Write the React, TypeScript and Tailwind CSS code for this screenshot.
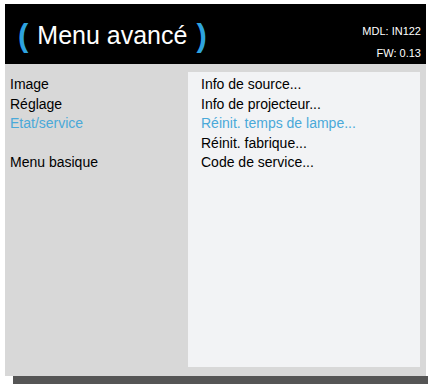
import React from 'react';

const leftItems = [
  { label: 'Image' },
  { label: 'Réglage' },
  { label: 'Etat/service', active: true },
  { label: '' },
  { label: 'Menu basique' },
];

const rightItems = [
  { label: 'Info de source...' },
  { label: 'Info de projecteur...' },
  { label: 'Réinit. temps de lampe...', active: true },
  { label: 'Réinit. fabrique...' },
  { label: 'Code de service...' },
];

export default function App() {
  return (
    <div className="w-[428px] h-[384px] bg-white overflow-hidden font-['Liberation_Sans',Arial,sans-serif]">
      <div className="ml-[5px] mt-[4px] w-[421px]">
        {/* Header */}
        <div className="h-[60px] bg-black flex items-start justify-between pl-[13px] pr-[5px]">
          <div className="flex items-center h-[60px] pt-[2px] gap-[9px]">
            <span className="text-[#2ea3df] text-[31px] font-bold leading-none">(</span>
            <span className="text-white text-[25px] leading-none">Menu avancé</span>
            <span className="text-[#2ea3df] text-[31px] font-bold leading-none">)</span>
          </div>
          <div className="flex flex-col items-end text-white text-[11px] leading-none pt-[22px] gap-[11px]">
            <span>MDL: IN122</span>
            <span>FW: 0.13</span>
          </div>
        </div>

        {/* Body */}
        <div className="h-[312px] bg-[#d8d8d8] flex pt-[8px] pb-[9px] pr-[6px]">
          <div className="w-[183px] pl-[5px] pt-[3px] text-[14px] leading-[19.5px]">
            {leftItems.map((it, i) => (
              <div key={i} className={`h-[19.5px] ${it.active ? 'text-[#4aa9d9]' : 'text-black'}`}>
                {it.label}
              </div>
            ))}
          </div>
          <div className="flex-1 bg-[#f2f3f5] pl-[13px] pt-[3px] text-[14px] leading-[19.5px]">
            {rightItems.map((it, i) => (
              <div key={i} className={`h-[19.5px] ${it.active ? 'text-[#4aa9d9]' : 'text-black'}`}>
                {it.label}
              </div>
            ))}
          </div>
        </div>
      </div>
      <div className="ml-[13px] h-[8px] bg-[#555555]" />
    </div>
  );
}
